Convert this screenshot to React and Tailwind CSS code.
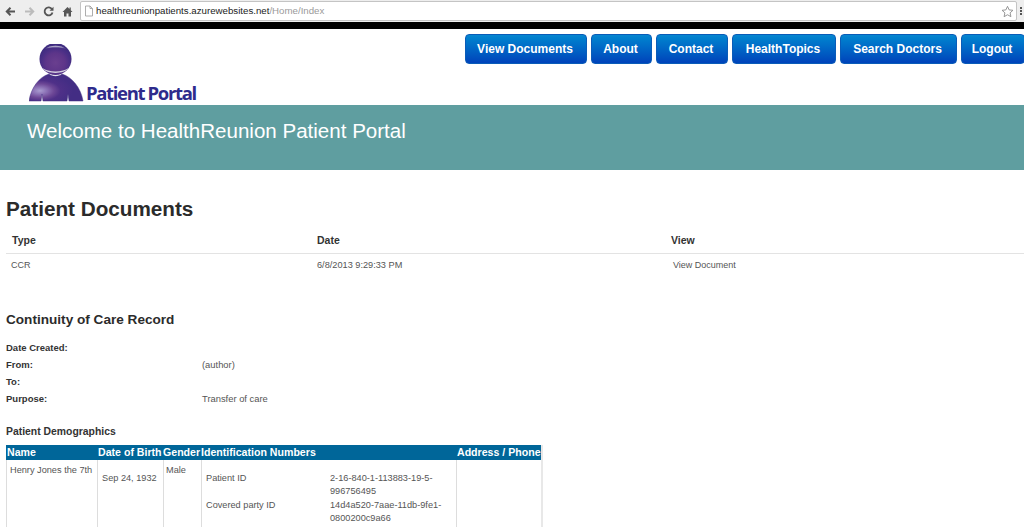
import React from "react";

const F = { fontFamily: '"Liberation Sans", Arial, sans-serif' };

function Logo() {
  return (
    <svg width="56" height="58" viewBox="0 0 56 58" className="shrink-0">
      <defs>
        <radialGradient id="hd" cx="0.5" cy="0.62" r="0.55">
          <stop offset="0" stopColor="#6a3f8f" />
          <stop offset="0.55" stopColor="#5d3589" />
          <stop offset="0.8" stopColor="#4a2f86" />
          <stop offset="1" stopColor="#3f2c80" />
        </radialGradient>
        <linearGradient id="hl" x1="0" y1="0" x2="0" y2="1">
          <stop offset="0" stopColor="#e2e0ea" stopOpacity="0.9" />
          <stop offset="1" stopColor="#8f86b5" stopOpacity="0.35" />
        </linearGradient>
        <radialGradient id="bd" cx="0.2" cy="0.62" r="0.62">
          <stop offset="0" stopColor="#a99cd0" />
          <stop offset="0.22" stopColor="#8a6fb4" />
          <stop offset="0.42" stopColor="#6d4796" />
          <stop offset="0.62" stopColor="#4f3088" />
          <stop offset="1" stopColor="#432d84" />
        </radialGradient>
      </defs>
      <circle cx="26.500" cy="15" r="16" fill="url(#hd)" />
      <path d="M16 5 C20 0.500 33 0.500 37 5 C32 3 21 3 16 5 Z" fill="url(#hl)" />
      <path d="M13.500 24 C19 28.500 34 28.500 39.500 24 C36 30.500 17 30.500 13.500 24 Z" fill="#d4d1e0" />
      <path d="M0 57 C2 44 10 33 20 30 C23 33 30 33 33 30 C43 33 52 44 54 57 L40 57 L39 50 L38 57 L14 57 L13 50 L12 57 Z" fill="url(#bd)" stroke="#3f2c80" strokeWidth="0.5" />
    </svg>
  );
}

function Nav({ children, w }) {
  return (
    <div className={`h-[30px] ${w} shrink-0 flex items-center justify-center pr-[2px] rounded-[4px] border border-[#0a5cb8] bg-gradient-to-b from-[#0786d0] to-[#0042ba] text-white font-bold text-[12px] whitespace-nowrap`}>
      {children}
    </div>
  );
}

function Info({ label, value }) {
  return (
    <div className="flex h-[17px] items-center">
      <div className="w-[196px] font-bold text-[#333] text-[9.5px]">{label}</div>
      <div className="text-[#555] text-[9.4px]">{value}</div>
    </div>
  );
}

export default function App() {
  return (
    <div style={F} className="w-[1024px] h-[527px] overflow-hidden bg-white flex flex-col">
      {/* browser chrome */}
      <div className="h-[22px] bg-[#eeeeee] flex items-center shrink-0">
        <div className="w-[80px] pl-[5px] flex items-center gap-[8px] text-[#555]">
          <svg width="11" height="11" viewBox="0 0 11 11"><path d="M10 5.500H2.500M5.500 1.800 1.800 5.500l3.700 3.700" fill="none" stroke="#555" strokeWidth="2" /></svg>
          <svg width="11" height="11" viewBox="0 0 11 11"><path d="M1 5.500h7.500M5.500 1.800l3.700 3.700-3.700 3.700" fill="none" stroke="#bbb" strokeWidth="2" /></svg>
          <svg width="11" height="11" viewBox="0 0 11 11"><path d="M9 3.200A4 4 0 1 0 9.500 6.500" fill="none" stroke="#555" strokeWidth="1.800" /><path d="M10.500 0.800v4h-4z" fill="#555" /></svg>
          <svg width="11" height="11" viewBox="0 0 11 11"><path d="M5.500 1 0.500 6h1.500v4.500h2.500V7.500h2v3H9V6h1.500L8.800 4.200V1.500H7.500v1.400z" fill="#555" /></svg>
        </div>
        <div className="w-[937px] h-[20px] bg-white border border-[#c4c4c4] rounded-[2px] flex items-center pl-[3px] pr-[2px] text-[9.7px]">
          <svg width="10" height="12" viewBox="0 0 10 12" className="mr-[2px]"><path d="M1.500 1h4.500l2.500 2.500V11h-7z M6 1v2.500h2.500" fill="#fff" stroke="#999" strokeWidth="0.8" /></svg>
          <span className="text-[#222]">healthreunionpatients.azurewebsites.net</span>
          <span className="text-[#9a9a9a]">/Home/Index</span>
          <svg width="13" height="13" viewBox="0 0 24 24" className="ml-auto"><path d="m12 2.500 3 6.500 7 .8-5.200 4.700 1.500 7L12 18l-6.300 3.500 1.500-7L2 9.800 9 9z" fill="#fff" stroke="#888" strokeWidth="1.600" /></svg>
        </div>
        <div className="ml-[3px] flex flex-col gap-[1px]">
          <div className="w-[2px] h-[2px] bg-[#555]" /><div className="w-[2px] h-[2px] bg-[#555]" /><div className="w-[2px] h-[2px] bg-[#555]" />
        </div>
      </div>
      <div className="h-[7px] bg-black shrink-0" />

      {/* header */}
      <div className="h-[76px] flex shrink-0">
        <div className="pl-[29px] pt-[15px] flex items-start relative w-[460px] shrink-0">
          <Logo />
          <span style={{ fontFamily: '"Open Sans", sans-serif' }} className="absolute left-[86px] top-[52px] text-[#2e2b8c] text-[18.5px] font-bold tracking-[-1.35px] leading-[24px] whitespace-nowrap">Patient Portal</span>
        </div>
        <div className="pt-[5px] pl-[5px] flex gap-[4px]">
          <Nav w="w-[122px]">View Documents</Nav>
          <Nav w="w-[61px]">About</Nav>
          <Nav w="w-[72px]">Contact</Nav>
          <Nav w="w-[104px]">HealthTopics</Nav>
          <Nav w="w-[117px]">Search Doctors</Nav>
          <Nav w="w-[64px]">Logout</Nav>
        </div>
      </div>

      {/* banner */}
      <div className="h-[65px] bg-[#5f9ea0] shrink-0 pl-[27px] pt-[14px] text-white text-[20.55px] leading-[24px]">
        Welcome to HealthReunion Patient Portal
      </div>

      {/* docs */}
      <div className="pl-[6px] pt-[26px]">
        <h1 className="text-[#2b2b2b] text-[20.7px] font-bold leading-[26px]">Patient Documents</h1>
        <div className="mt-[7px] h-[25px] flex items-center border-b border-[#e3e3e3] text-[10.5px] font-bold text-[#333]">
          <div className="w-[311px] pl-[6px]">Type</div>
          <div className="w-[354px]">Date</div>
          <div>View</div>
        </div>
        <div className="h-[24px] flex items-center text-[9px] text-[#555]">
          <div className="w-[311px] pl-[5px]">CCR</div>
          <div className="w-[356px] text-[9.2px]">6/8/2013 9:29:33 PM</div>
          <div>View Document</div>
        </div>

        <h2 className="mt-[34px] text-[#2b2b2b] text-[13.6px] font-bold leading-[16px]">Continuity of Care Record</h2>
        <div className="mt-[12px]">
          <Info label="Date Created:" value="" />
          <Info label="From:" value="(author)" />
          <Info label="To:" value="" />
          <Info label="Purpose:" value="Transfer of care" />
        </div>

        <div className="mt-[18px] text-[10.4px] font-bold text-[#333] leading-[12px]">Patient Demographics</div>

        <div className="mt-[7px] w-[537px] border-r-2 border-[#e8e8e8]">
          <div className="h-[15px] bg-[#006699] text-white text-[10.6px] font-bold flex items-center leading-none whitespace-nowrap">
            <div className="w-[91px] pl-[1px]">Name</div>
            <div className="w-[66px] pl-[1px]">Date of Birth</div>
            <div className="w-[38px]">Gender</div>
            <div className="w-[255px]">Identification Numbers</div>
            <div className="pl-[1px]">Address / Phone</div>
          </div>
          <div className="flex h-[70px] text-[9.2px] text-[#555] border-l border-[#ddd]">
            <div className="w-[91px] pl-[3px] pt-[4px] border-r border-[#ddd] whitespace-nowrap">Henry Jones the 7th</div>
            <div className="w-[66px] pl-[4px] pt-[12px] border-r border-[#ddd] whitespace-nowrap">Sep 24, 1932</div>
            <div className="w-[38px] pl-[2px] pt-[4px] border-r border-[#ddd]">Male</div>
            <div className="w-[255px] border-r border-[#ddd] pl-[4px] pt-[12px] leading-[13px]">
              <div className="flex h-[27px]">
                <div className="w-[124px]">Patient ID</div>
                <div className="w-[125px]">2-16-840-1-113883-19-5-<br />996756495</div>
              </div>
              <div className="flex">
                <div className="w-[124px]">Covered party ID</div>
                <div className="w-[125px]">14d4a520-7aae-11db-9fe1-<br />0800200c9a66</div>
              </div>
            </div>
            <div className="flex-1" />
          </div>
        </div>
      </div>
    </div>
  );
}
